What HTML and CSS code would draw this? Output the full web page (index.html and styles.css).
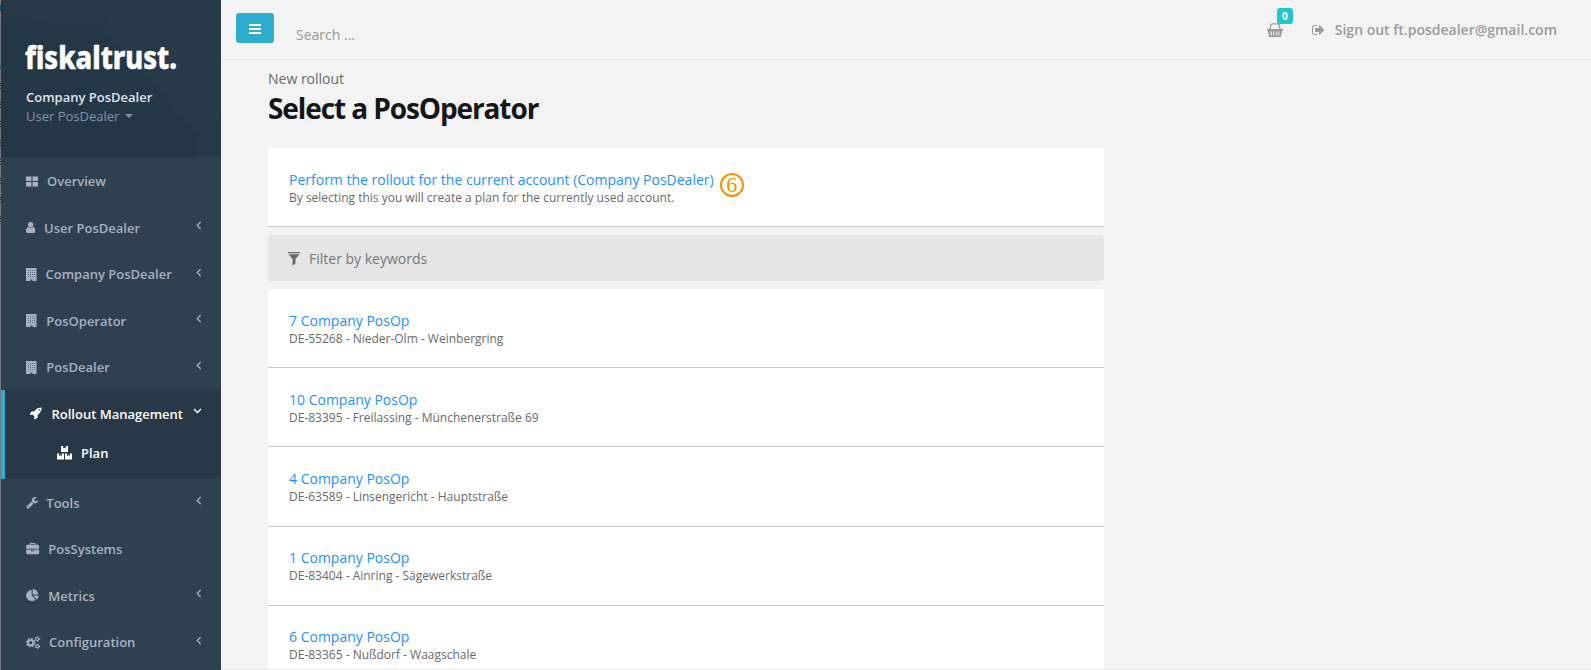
FILE: index.html
```html
<!DOCTYPE html>
<html lang="en">
<head>
<meta charset="utf-8">
<title>Select a PosOperator</title>
<link rel="stylesheet" href="styles.css">
</head>
<body>
<svg class="defs" width="0" height="0">
  <symbol id="building" viewBox="0 0 11 13"><path fill-rule="evenodd" d="M0 0H10.500V13H6.500V11.500H4.500V13H0z"/><path fill="#2f4050" opacity=".55" d="M2 2H3V3H2zM4 2H5V3H4zM6 2H7V3H6zM8 2H9V3H8zM2 4H3V5H2zM4 4H5V5H4zM6 4H7V5H6zM8 4H9V5H8zM2 6H3V7H2zM4 6H5V7H4zM6 6H7V7H6zM8 6H9V7H8zM2 8H3V9H2zM4 8H5V9H4zM6 8H7V9H6zM8 8H9V9H8z"/></symbol>
  <symbol id="left" viewBox="0 0 6 9"><path d="M4.700 1 1.200 4.500 4.700 8" fill="none" stroke="currentColor" stroke-width="1.300"/></symbol>
</svg>
<div class="app">
  <div class="edge"></div>
  <aside class="sidebar">
    <header class="profile">
      <svg class="facets" viewBox="0 0 220 158" preserveAspectRatio="none">
        <path fill="#283b4a" d="M120 0H220V20L100 27z"/>
        <path fill="#243747" d="M0 18 100 27 197 133 194 158H0z"/>
        <path fill="#273a4a" d="M100 27 220 0V110L197 133z"/>
      </svg>
      <div class="profile-text">
        <svg class="logo" width="156" height="34"><text x="-1" y="25" textLength="152" lengthAdjust="spacingAndGlyphs">fiskaltrust.</text></svg>
        <div class="company">Company PosDealer</div>
        <div class="user">User PosDealer <i class="caret"></i></div>
      </div>
    </header>
    <nav>
      <a class="item"><svg class="ic w-overview" viewBox="0 0 21 13"><path d="M0 1.500H5.500V6H0zM6.500 1.500H12V6H6.500zM0 7H5.500V11.500H0zM6.500 7H12V11.500H6.500z"/></svg>Overview</a>
      <a class="item"><svg class="ic w-user" viewBox="256 0 2480 1792"><path d="M1536 1399q0 109-62.500 187t-150.500 78h-854q-88 0-150.500-78t-62.500-187q0-85 8.500-160.500t31.500-152 58.500-131 94-89 134.500-34.500q131 128 313 128t313-128q76 0 134.500 34.500t94 89 58.500 131 31.500 152 8.500 160.500zm-256-887q0 159-112.500 271.500t-271.500 112.500-271.500-112.500-112.500-271.500 112.500-271.500 271.500-112.500 271.500 112.500 112.500 271.500z"/></svg>User PosDealer<svg class="arrow"><use href="#left"/></svg></a>
      <a class="item"><svg class="ic w-company"><use href="#building" width="11" height="13"/></svg>Company PosDealer<svg class="arrow"><use href="#left"/></svg></a>
      <a class="item"><svg class="ic w-building"><use href="#building" width="11" height="13"/></svg>PosOperator<svg class="arrow"><use href="#left"/></svg></a>
      <a class="item"><svg class="ic w-building"><use href="#building" width="11" height="13"/></svg>PosDealer<svg class="arrow"><use href="#left"/></svg></a>
      <div class="active">
        <a class="item"><svg class="ic w-rocket" viewBox="64 64 2970 1792"><path fill-rule="evenodd" d="M1440 448q0-40-28-68t-68-28-68 28-28 68 28 68 68 28 68-28 28-68zm224-288q0 249-75.500 430.500t-253.500 360.500q-81 80-195 176l-20 379q-2 16-16 26l-384 224q-7 4-16 4-12 0-23-9l-64-64q-13-14-8-32l85-276-281-281-276 85q-3 1-9 1-14 0-23-9l-64-64q-17-19-5-39l224-384q10-14 26-16l379-20q96-114 176-195 188-187 358-258t431-71q14 0 24 9.500t10 22.500z"/></svg>Rollout Management<svg class="arrow down" viewBox="0 0 9 6"><path d="M1 1 4.500 4.500 8 1" fill="none" stroke="currentColor" stroke-width="1.400"/></svg></a>
        <a class="subitem"><svg class="ic w-plan" viewBox="0 0 24 14"><path d="M4 0H6.200V2.500L7.500 1.800 8.800 2.500V0H11V6H4zM0 7.500H2.200V10L3.500 9.300 4.800 10V7.500H7V13.500H0zM8 7.500H10.200V10L11.500 9.300 12.800 10V7.500H15V13.500H8z"/></svg>Plan</a>
      </div>
      <a class="item"><svg class="ic w-building" viewBox="64 0 2757 1792"><path d="M448 1472q0-26-19-45t-45-19-45 19-19 45 19 45 45 19 45-19 19-45zm644-420l-682 682q-37 37-90 37-52 0-91-37l-106-108q-38-36-38-90 0-53 38-91l681-681q39 98 114.500 173.500t173.500 114.500zm634-435q0 39-23 106-47 134-164.500 217.500t-258.500 83.500q-185 0-316.500-131.500t-131.500-316.500 131.500-316.500 316.500-131.500q58 0 121.500 16.500t107.500 46.500q16 11 16 28t-16 28l-293 169v224l193 107q5-3 79-48.500t135.500-81 70.500-35.500q15 0 23.500 10t8.500 25z"/></svg>Tools<svg class="arrow"><use href="#left"/></svg></a>
      <a class="item"><svg class="ic w-wide" viewBox="0 0 3033 1792"><path fill-rule="evenodd" d="M640 256h512v-128h-512v128zm1152 640v480q0 66-47 113t-113 47h-1472q-66 0-113-47t-47-113v-480h672v160q0 26 19 45t45 19h320q26 0 45-19t19-45v-160h672zm-768 0v128h-256v-128h256zm768-480v384h-1792v-384q0-66 47-113t113-47h352v-160q0-40 28-68t68-28h576q40 0 68 28t28 68v160h352q66 0 113 47t47 113z"/></svg>PosSystems</a>
      <a class="item"><svg class="ic w-wide" viewBox="0 0 3033 1792"><path d="M768 890l546 546q-106 108-247.500 168t-298.500 60q-209 0-385.500-103t-279.500-279.500-103-385.500 103-385.500 279.500-279.500 385.500-103v762zm187 6h773q0 157-60 298.500t-168 247.500zm709-128h-768v-768q209 0 385.500 103t279.500 279.500 103 385.500z"/></svg>Metrics<svg class="arrow"><use href="#left"/></svg></a>
      <a class="item"><svg class="ic w-cogs" viewBox="0 0 23 13"><g fill="none" stroke="currentColor"><circle cx="4.700" cy="6.700" r="2.700" stroke-width="2.100"/><circle cx="4.700" cy="6.700" r="4.100" stroke-width="1.300" stroke-dasharray="1.610"/><circle cx="11.300" cy="3" r="1.500" stroke-width="1.200"/><circle cx="11.300" cy="3" r="2.400" stroke-width=".9" stroke-dasharray="1.260"/><circle cx="11.300" cy="10.300" r="1.500" stroke-width="1.200"/><circle cx="11.300" cy="10.300" r="2.400" stroke-width=".9" stroke-dasharray="1.260"/></g></svg>Configuration<svg class="arrow"><use href="#left"/></svg></a>
    </nav>
  </aside>
  <main class="page">
    <header class="topbar">
      <button class="toggle" aria-label="Menu"><svg width="12" height="10" viewBox="0 0 12 10"><path fill="#fff" d="M0 0H12V2H0zM0 4H12V6H0zM0 8H12V10H0z"/></svg></button>
      <div class="search">Search ...</div>
      <div class="basket">
        <svg width="16" height="15" viewBox="0 0 16 15"><path d="M2.800 6.500 4 1.800Q4.300.8 5.300.8H10.700Q11.700.8 12 1.800L13.200 6.500" fill="none" stroke="#999c9e" stroke-width="1.300"/><path fill="#999c9e" fill-rule="evenodd" d="M0 6H16V8H15L14 14H2L1 8H0zM3.500 8.500 4 12.500H5L4.700 8.500zM6.200 8.500V12.500H7.200V8.500zM8.900 8.500V12.500H9.900V8.500zM11.500 8.500 11.100 12.500H12.100L12.600 8.500z"/></svg>
        <span class="badge">0</span>
      </div>
      <a class="signout"><svg width="14" height="14" viewBox="64 0 1792 1792"><path fill="#999c9e" d="M704 1440q0 4 1 20t.5 26.500-3 23.500-10 19.500-20.500 6.500h-320q-119 0-203.500-84.500t-84.500-203.500v-704q0-119 84.500-203.500t203.500-84.500h320q13 0 22.500 9.500t9.500 22.500q0 4 1 20t.5 26.500-3 23.500-10 19.500-20.500 6.500h-320q-66 0-113 47t-47 113v704q0 66 47 113t113 47h312l11.500 1 11.500 3 8 5.500 7 9 2 13.500zm928-544q0 26-19 45l-544 544q-19 19-45 19t-45-19-19-45v-288h-448q-26 0-45-19t-19-45v-384q0-26 19-45t45-19h448v-288q0-26 19-45t45-19 45 19l544 544q19 19 19 45z"/></svg>Sign out ft.posdealer@gmail.com</a>
    </header>
    <section class="content">
      <div class="crumb">New rollout</div>
      <h1>Select a PosOperator</h1>
      <div class="card own"><div><a>Perform the rollout for the current account (Company PosDealer)</a><p>By selecting this you will create a plan for the currently used account.</p></div><span class="step">6</span></div>
      <div class="filter"><svg width="12" height="14" viewBox="0 0 12 14"><path fill="#676a6c" d="M0 0H12V1.200H0zM.5 2.200H11.500L7.500 7V11.500L4.500 13.500V7z"/></svg>Filter by keywords</div>
      <div class="card"><a>7 Company PosOp</a><p>DE-55268 - Nieder-Olm - Weinbergring</p></div>
      <div class="card"><a>10 Company PosOp</a><p>DE-83395 - Freilassing - Münchenerstraße 69</p></div>
      <div class="card"><a>4 Company PosOp</a><p>DE-63589 - Linsengericht - Hauptstraße</p></div>
      <div class="card"><a>1 Company PosOp</a><p>DE-83404 - Ainring - Sägewerkstraße</p></div>
      <div class="card"><a>6 Company PosOp</a><p>DE-83365 - Nußdorf - Waagschale</p></div>
    </section>
  </main>
</div>
</body>
</html>
```
FILE: styles.css
```css
* { box-sizing: border-box; }
body { margin: 0; font-family: "Open Sans", sans-serif; font-size: 14px; line-height: 20px; color: #676a6c; background: #f3f3f4; overflow: hidden; }
.defs { display: none; }
.app { display: flex; height: 670px; overflow: hidden; background: #f3f3f3; }
.edge {
  flex: none; width: 1px; background-color: #77787a;
  background-image: linear-gradient(#1d4a68, #1d4a68), linear-gradient(#1d5a78, #1d5a78), repeating-linear-gradient(#222 0 1px, #77787a 1px 2px, #222 2px 3px, #77787a 3px 5px, #222 5px 6px, #77787a 6px 19px);
  background-size: 1px 6px, 1px 4px, 1px 140px;
  background-position: 0 5px, 0 65px, 0 83px;
  background-repeat: no-repeat;
}

.sidebar { width: 220px; flex: none; background: #2f4050; overflow: hidden; }
.profile { position: relative; height: 158px; background: #263949; border-bottom: 1px solid #2a3b4a; overflow: hidden; }
.facets { position: absolute; inset: 0; width: 220px; height: 158px; }
.profile-text { position: relative; padding: 44px 0 0 25px; }
.logo { display: block; overflow: visible; }
.logo text { font: 800 32px "Noto Sans", sans-serif; fill: #fff; stroke: #fff; stroke-width: .5px; }
.company { margin-top: 9px; font-size: 13px; font-weight: 600; line-height: 20px; color: #dfe4ed; }
.user { display: flex; align-items: center; font-size: 13px; line-height: 18px; color: #8095a8; }
.caret { margin-left: 6px; border: 4px solid transparent; border-top-color: #8095a8; border-bottom: 0; }

.item { display: flex; align-items: center; height: 46.57px; padding: 0 19px 0 25px; font-size: 13px; font-weight: 600; color: #a7b1c2; white-space: nowrap; }
.item:nth-child(5) { height: 46.2px; }
.ic { flex: none; height: 13px; fill: currentColor; }
.w-overview { width: 21px; }
.w-user { width: 18px; }
.w-company { width: 19.5px; }
.w-building { width: 20.3px; }
.w-wide { width: 22.3px; }
.w-cogs { width: 23px; }
.w-rocket { width: 21.5px; }
.w-plan { width: 24px; height: 14px; }
.arrow { width: 6px; height: 9px; margin: 0 0 4px auto; flex: none; }
.arrow.down { width: 9px; height: 6px; margin-bottom: 5px; }
.active { height: 89px; border-left: 4px solid #2fadd0; background: #293846; }
.active .item, .subitem { color: #fff; }
.active .item { padding-right: 19px; }
.subitem { display: flex; align-items: center; height: 32px; padding-left: 52px; font-size: 13px; font-weight: 600; }

.page { flex: 1; display: flex; flex-direction: column; min-width: 0; height: 670px; border-bottom: 1px solid #e7e7e8; }
.topbar { display: flex; flex: none; height: 60px; padding-left: 15px; padding-right: 34px; border-bottom: 1px solid #e7e7e8; }
.toggle { display: flex; align-items: center; justify-content: center; width: 38px; height: 30px; margin-top: 13px; padding: 2px 0 0; border: 0; border-radius: 3px; background: #2fadd0; }
.search { margin: 25px auto 0 22px; color: #999; }
.basket { position: relative; width: 16px; margin-right: 29px; padding-top: 23px; }
.badge { position: absolute; left: 10px; top: 8px; width: 16px; height: 16px; border-radius: 3px; background: #23c6c8; color: #fff; font-size: 10px; font-weight: 700; line-height: 16px; text-align: center; }
.signout { display: flex; align-items: center; gap: 9px; height: 60px; font-weight: 600; color: #999c9e; }

.content { flex: 1; min-height: 0; width: 883px; padding: 9px 0 0 47px; overflow: hidden; }
.crumb { line-height: 20px; }
h1 { margin: 2px 0 23px; font-size: 28px; font-weight: 700; line-height: 34px; letter-spacing: -1.1px; color: #141617; }
.card { height: 79.2px; padding: 21.6px 21px 0; background: #fff; border-bottom: 1px solid #c8c8c8; }
.card a { display: block; color: #1e90ff; line-height: 20px; }
.card p { margin: 0; font-size: 12px; line-height: 16px; }
.own { display: flex; gap: 6px; height: 79px; padding-top: 22px; }
.step { flex: none; width: 24px; height: 24px; margin-top: 3px; border: 2px solid #f39200; border-radius: 50%; color: #f39200; font: 22px/20px "Liberation Serif", serif; text-align: center; }
.filter { display: flex; align-items: center; gap: 9px; height: 46px; margin: 8px 0; padding: 1px 0 0 20px; border-radius: 4px; background: #e5e5e5; color: #76787a; }
```
